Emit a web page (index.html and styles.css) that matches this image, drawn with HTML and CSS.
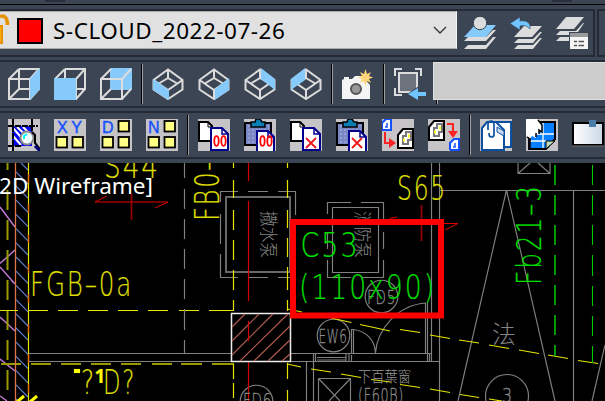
FILE: index.html
```html
<!DOCTYPE html>
<html lang="en">
<head>
<meta charset="utf-8">
<title>S-CLOUD</title>
<link rel="stylesheet" href="styles.css">
</head>
<body>
<svg class="defs" aria-hidden="true">
  <defs>
    <g id="box"><path d="M1 11H22V31H1ZM11 1H31V21H11V1M1 11L11 1M22 11L31 1M1 31L11 21M22 31L31 21" fill="none" stroke="#dcdcdc" stroke-width="2"/></g>
    <g id="iso"><path d="M1.500 12L16 1.500L30.500 12V21.500L16 31L1.500 21.500ZM1.500 12L16 22L30.500 12M16 22V31M16 1.500V10M16 10L6 16M16 10L26 16" fill="none" stroke="#dcdcdc" stroke-width="2"/></g>
    <g id="clip">
      <path d="M1 4H27V26H1Z" fill="#7b88c8" stroke="#000" stroke-width="2"/>
      <path d="M4 7H25M4 11H25M4 15H25M4 19H25M4 23H25" stroke="#b2b5cc" stroke-dasharray="2 2"/>
      <path d="M7 3H11L12 0H16L18 3H21V8H7Z" fill="#087fb5" stroke="#000" stroke-width="1.500"/>
    </g>
    <g id="sheet"><path d="M1 3H10L14 7V22H1Z" fill="#fff" stroke="#000" stroke-width="2"/><path d="M10 3V8H14" fill="none" stroke="#000"/></g>
    <g id="blue-sheet"><path d="M13 9H24L30 15V31H13Z" fill="#fff" stroke="#00008b" stroke-width="2"/><path d="M24 9V15H30" fill="none" stroke="#00008b" stroke-width="1.500"/></g>
    <g id="zeros" fill="none" stroke="#f00" stroke-width="1.800"><ellipse cx="17.500" cy="22" rx="2.200" ry="4.800"/><ellipse cx="24.500" cy="22" rx="2.200" ry="4.800"/></g>
    <path id="cross" d="M16 19L26 29M26 19L16 29" fill="none" stroke="#f01818" stroke-width="1.800"/>
    <g id="yellow-cell"><rect x="1" y="1" width="10.500" height="10.500" fill="#ffff85" stroke="#000" stroke-width="1.800"/></g>
    <g id="block"><path d="M1 8L6 2H16V21H1Z" fill="#fff" stroke="#000" stroke-width="2"/><path d="M6 18V9H9V5H14V13H11V17H6" fill="none" stroke="#777" stroke-width="2"/><path d="M6 13H8M11 9H13" stroke="#ffff20" stroke-width="3"/></g>
    <g id="mini"><path d="M0 11V4L4 0H9V11H0" fill="#fff" stroke="#1450ff" stroke-width="2"/><path d="M5 4V8H3" fill="none" stroke="#1450ff" stroke-width="1.500"/></g>
    <g id="layers" fill="#dcdcdc"><path d="M0 24L4 20H22L29 13H32L22 24ZM0 32L4 28H22L29 20H32L22 32Z"/></g>
  </defs>
</svg>
<main class="app">
  <div class="edge"><i class="notch first"></i><i class="notch second"></i></div>
  <div class="gutter"></div>
  <header class="layer-row">
    <section class="layer-bar">
      <div class="combo">
        <svg class="lock" width="10" height="32" viewBox="0 0 10 32"><path d="M0 13H3V29H0Z" fill="#ffad08"/><path d="M0 12H2V29H0" fill="none" stroke="#e69200" stroke-width="2"/><path d="M0 2.500C5 1 7.500 4 7.500 11" fill="none" stroke="#e69200" stroke-width="3.500"/></svg>
        <i class="swatch"></i>
        <span class="layer-name">S-CLOUD_2022-07-26</span>
        <svg class="chevron" width="14" height="8" viewBox="0 0 14 8"><path d="M1 1L7 7L13 1" fill="none" stroke="#333" stroke-width="1.300"/></svg>
      </div>
      <div class="layer-tools">
        <svg width="32" height="32"><use href="#layers"/><path d="M0 20L11 8H32L22 20Z" fill="#86c9fb"/><circle cx="16" cy="6" r="6.700" fill="#dcdcdc" stroke="#3c4554"/></svg>
        <svg width="32" height="32"><path d="M4 20L14 9H32L22 20ZM4 26L8 22H23L30 15H32L23 26ZM4 32L8 28H23L30 21H32L23 32Z" fill="#dcdcdc"/><path d="M0 6.500L10 0V4C17 3 21 6 20 12C17 9 14 8 10 9V13Z" fill="#70c4ff" stroke="#3c4554" stroke-width=".6"/></svg>
        <svg width="32" height="32"><path d="M0 12L10 0H28L18 12ZM0 18L4 14H20L27 6H28L20 18ZM0 24L4 20H14V24Z" fill="#dcdcdc"/><path d="M13 15H32V32H13Z" fill="#3c4554"/><path d="M14 16H32V32H14Z" fill="#f5f5f5"/><path d="M14 16H32V20H14Z" fill="#999"/><path d="M18 24.500H21M22.500 24.500H28M18 28.500H21M22.500 28.500H28" stroke="#555" stroke-width="1.500"/></svg>
      </div>
    </section>
    <section class="next-bar"></section>
  </header>

  <nav class="toolbar views">
    <svg width="32" height="32"><use href="#box"/><path d="M22 11L32 0V21L22 32Z" fill="#86c9fb"/></svg>
    <svg width="32" height="32"><use href="#box"/><path d="M0 10H22V32H0Z" fill="#86c9fb"/></svg>
    <svg width="32" height="32"><path d="M10 0H32V22H10Z" fill="#86c9fb"/><path d="M1 11H22V31H1ZM1 11L11 1M22 11L31 1M1 31L11 21M22 31L31 21" fill="none" stroke="#dcdcdc" stroke-width="2"/></svg>
    <i class="sep"></i>
    <svg width="32" height="32"><use href="#iso"/><path d="M1 11L17 22V32L1 22Z" fill="#86c9fb"/></svg>
    <svg width="32" height="32"><use href="#iso"/><path d="M17 21L31 10V22L17 32Z" fill="#86c9fb"/></svg>
    <svg width="32" height="32"><use href="#iso"/><path d="M17 0L31 11V22L17 11Z" fill="#86c9fb"/></svg>
    <svg width="32" height="32"><use href="#iso"/><path d="M1 11L15 0V12L1 22Z" fill="#86c9fb"/></svg>
    <i class="sep"></i>
    <svg width="32" height="32"><path d="M0 12L2 11V9H7V11H10L13 8H20L28 17V31H0Z" fill="#f4f4f4"/><circle cx="14" cy="21" r="5" fill="#999" stroke="#555" stroke-width="2"/><path d="M23.500 1L25 6L29 4L27 8L31 9.500L27 11L29 15L25 13L23.500 18L22 13L18 15L20 11L16 9.500L20 8L18 4L22 6Z" fill="#ffd478"/></svg>
    <i class="sep"></i>
    <svg width="32" height="32"><path d="M1 8V1H8M21 1H27V8M1 20V27H8" fill="none" stroke="#dcdcdc" stroke-width="2"/><path d="M5 5H23V24H5Z" fill="#6d727c" stroke="#dcdcdc" stroke-width="2"/><path d="M13 26L25 18V32Z" fill="#3c4554"/><path d="M14 26L24 20V24H32V28H24V32Z" fill="#70c4ff"/></svg>
    <i class="sep stub"></i>
    <div class="panel"></div>
  </nav>

  <nav class="toolbar tools">
    <svg width="32" height="32"><path class="paper" d="M0 0H32V32H0Z"/><path d="M4 7H24V27H4Z" fill="#0808f0"/><path d="M5 9L19 25M9 8L23 21M15 8L23 16M5 17L13 26" stroke="#fff" stroke-width="2"/><path d="M5 0V32M24 0V12M0 7H30M0 27H13" fill="none" stroke="#000" stroke-width="2" stroke-dasharray="6 1"/><circle cx="19" cy="19" r="6.500" fill="#f2ffff" stroke="#888" stroke-width="2"/><path d="M16 20V17L19 15" fill="none" stroke="#0ff" stroke-width="2"/><path d="M24 13L27 16V24L32 30" fill="none" stroke="#000" stroke-width="2"/><path d="M27 27L32 32" stroke="#000080" stroke-width="3"/></svg>
    <svg width="32" height="32"><path class="paper" d="M0 0H32V32H0Z"/><text class="icon-letter" x="3" y="14" textLength="25">XY</text><use href="#yellow-cell" x="1.500" y="17"/><use href="#yellow-cell" x="17.500" y="17"/></svg>
    <svg width="32" height="32"><path class="paper" d="M0 0H32V32H0Z"/><text class="icon-letter" x="2" y="14">D</text><use href="#yellow-cell" x="1.500" y="17"/><use href="#yellow-cell" x="17.500" y="17"/><use href="#yellow-cell" x="17.500" y="1"/></svg>
    <svg width="32" height="32"><path class="paper" d="M0 0H32V32H0Z"/><text class="icon-letter" x="2" y="14">N</text><use href="#yellow-cell" x="1.500" y="17"/><use href="#yellow-cell" x="17.500" y="17"/><use href="#yellow-cell" x="17.500" y="1"/></svg>
    <i class="sep"></i>
    <svg width="32" height="32"><path class="paper" d="M0 0H32V32H0Z"/><use href="#sheet"/><use href="#blue-sheet"/><use href="#zeros" x="1"/></svg>
    <svg width="32" height="32"><path class="paper" d="M0 0H32V32H0Z"/><use href="#clip"/><use href="#blue-sheet" y="3"/><use href="#zeros" x="1"/></svg>
    <svg width="32" height="32"><path class="paper" d="M0 0H32V32H0Z"/><use href="#sheet"/><use href="#blue-sheet"/><use href="#cross"/></svg>
    <svg width="32" height="32"><path class="paper" d="M0 0H32V32H0Z"/><use href="#clip"/><use href="#blue-sheet" y="3"/><use href="#cross"/></svg>
    <svg width="32" height="32"><path class="paper" d="M0 0H32V32H0Z"/><use href="#mini"/><path d="M3 13V24H8" fill="none" stroke="#f22" stroke-width="2"/><path d="M7 19L14 24L7 29Z" fill="#f22"/><use href="#block" x="15" y="8"/></svg>
    <svg width="32" height="32"><path class="paper" d="M0 0H32V32H0Z"/><use href="#block"/><path d="M19 5H25V13" fill="none" stroke="#f22" stroke-width="2"/><path d="M20 12H30L25 19Z" fill="#f22"/><use href="#mini" x="22" y="20"/></svg>
    <i class="sep"></i>
    <svg width="32" height="32"><path class="paper" d="M0 0H32V32H0Z"/><path d="M12 3H31V28H20Z" fill="#fff" stroke="#0c50a0" stroke-width="2"/><path d="M2 9L7 3H16L24 11V31H2Z" fill="#fff" stroke="#0c50a0" stroke-width="2"/><path d="M17 8L24 12V17L17 13Z" fill="#c7d8f0" stroke="#0c50a0"/><path d="M8 11V5Q8 2 11 2Q14 2 14 6V16Q14 18 11 18Q9 18 9 14" fill="none" stroke="#0c50a0" stroke-width="1.700"/></svg>
    <svg width="32" height="32"><path class="paper" d="M0 0H32V32H0Z"/><path d="M3 3H29V20L20 30H3Z" fill="#087fff" stroke="#000" stroke-width="2"/><path d="M17 4V29M4 15H28M4 22H20" stroke="#fff" stroke-width="1.300"/><path d="M20 30V22H29Z" fill="#c1ddc0" stroke="#000"/><path d="M0 0H11L16 6V14L13 12V16L10 14V19L6 17L4 20L0 16Z" fill="#fff"/><path d="M1 18L4 20V29M12 1L16 6V13L13 11V15M10 14V18" fill="none" stroke="#000" stroke-width="1.500"/></svg>
    <svg width="34" height="32"><defs><linearGradient id="glass" x1="0" y1="0" x2="1" y2="0"><stop stop-color="#fff"/><stop offset="1" stop-color="#cbd8e6"/></linearGradient></defs><path d="M1 4H31V26H1Z" fill="url(#glass)" stroke="#000" stroke-width="2"/><path d="M0 27H32" stroke="#777"/><path d="M17 1H24V8H17Z" fill="#4b7ba9"/></svg>
  </nav>

  <section class="viewport">
  <svg class="drawing" width="605" height="238" viewBox="0 163 605 238">
    <g class="blue">
      <path d="M21 163L28 170M16 171.800L28 184M16 186L28 198.200M16 200.200L28 212.400M16 214.400L28 226.600M16 228.600L28 240.800M16 242.800L28 255M16 257L28 269.200M16 271.200L28 283.400M16 285.400L28 297.600M16 299.600L28 311.800M16 313.800L28 326M16 328L28 340.200M16 342.200L28 354.400M16 356.400L28 368.600M16 370.600L28 382.800M16 384.800L28 397M16 399L18 401"/>
    </g>
    <path class="magenta" d="M0 207L15 227M15 250L0 263.500M0 267L15 284M11 280L15 284M0 317L15 331M0 359L15 371M0 396L7 401"/>
    <path class="olive" d="M7.500 163V170M7.500 190V210M7.500 220V240M7.500 250V270M7.500 280V300M7.500 310V330M7.500 340V360M7.500 370V390M1 364H21M31 364H51M61 364H81M91 364H111M121 364H141M152 364H172M181 364H202M212 364H234"/>
    <path class="orange" d="M15.500 163V401"/>
    <path class="yellow" d="M28.500 163V401M0 310.500H18M29 310.500H48M58 310.500H78M88 310.500H108M118 310.500H138M148 310.500H168M179 310.500H199M209 310.500H234"/>
    <path class="ember" d="M28.500 174V183M28.500 204V213M28.500 235V243M28.500 264V273M28.500 294V303M28.500 324V333M28.500 354V363M28.500 384V393"/>
    <path class="thick-yellow" d="M17 402L24 396M30 402L37 396"/>

    <g class="grey">
      <path d="M184.500 163V178M184.500 189V209M184.500 219V239M184.500 249V269M184.500 279V299M184.500 309V330M184.500 340V353M29 353.500H231M29 361.500H231M290 353.500H432M290 361.500H440"/>
      <path d="M220.500 202V191.500H238M248 191.500H268M278 191.500H295.500V215M220.500 214V244M220.500 254V277.500H238M248 277.500H268M278 277.500H290"/>
      <path class="pump" d="M226 197H290V272H226Z"/>
      <path d="M327.500 214V202.500H351M361 202.500H383.500V222M327.500 232V249M327.500 260V277.500H351M361 277.500H383.500V260M383.500 232V249M332.500 207.500H378.500V272.500H332.500Z"/>
      <path d="M431.500 163V353M439.500 163V401M440 190.500H605M573.500 190V401"/>
      <path d="M518 163V173.500H550V163M518 173.500L530 163M550 173.500L538 163M506.500 190L458 401M506.500 190L555 401M605 345L592 401"/>
      <circle cx="333.500" cy="335.500" r="16.300"/><circle cx="381.500" cy="296.500" r="16.300"/><circle cx="256.500" cy="401.500" r="16.300"/><circle cx="507" cy="396" r="21.500"/>
      <path d="M351.500 353V329.500H353.500V353M353 329.500C366 331 375 340 375.500 353M375.500 353C377 330 397 305 426 303M425.500 303V353M427.500 303V361M429.500 353V361M431.500 353V361M306.500 362V401M313.500 353V401M315.500 353V361M317 357.500H346M317 360H346M346 353V361M349 353V361M351.500 355V361"/>
      <path d="M318.500 378.500H350.500V401M318.500 378.500V401M318.500 378.500L340 401M350.500 378.500L329 401"/>
    </g>
    <g class="red">
      <path class="dark-red" d="M95 202H168M131.500 194V220M421.500 205V241"/>
      <path d="M107 196L95 202M168 202L155 208M390 218.500L397 217M443 223.500H458L445 230"/>
    </g>
    <path class="column-line" d="M248.500 163V181M248.500 201V301M248.500 362V401"/>
    <path class="yellow" d="M233.500 163V168M233.500 180V198M233.500 210V230M233.500 240V260M233.500 270V290M233.500 300V311M233.500 364V379M233.500 383V398M287.500 163V168M287.500 180V198M287.500 210V228M287.500 238V257M287.500 267V290M287.500 300V311M287.500 363V379M287.500 390V401"/>
    <path class="yellow" d="M287 309L302 312M331 318L351.500 322.500M360 324.500L390 331M400 329.500L420 332.500M430 335L450 338.500M459 340L479 343M489 345L509 348.500M519 350L539 353.500M548 355L568 358.500M578 360.500L598 363.500M287 364L301 367M311 369L331 372M341 374L361 377.500M371 379.500L391 382M400 384.500L420 387.500M430 389L450 392.500M460 394.500L479 397.500M489 399L502 401"/>
    <path class="hatched" d="M231.500 313.500H290.500V361.500H231.500Z"/>
    <path class="hatch" d="M232 327L245 314M232 341L259 314M232 355L273 314M240 361L288 314M254 361L290 326M268 361L290 340M282 361L290 354"/>
    <path class="column-line" d="M248.500 321V341"/>
    <path class="green-line" d="M592.500 165V185M592.500 195V215M592.500 225V245M592.500 255V276M592.500 286V306M592.500 316V336M592.500 346V363"/>
    <path class="green-line deep" d="M555 165V185M555 195V215M555 225V245M555 255V275M555 285V305M555 315V335M555 345V356"/>

    <g class="cad yellow-text">
      <text x="104" y="178" textLength="56" lengthAdjust="spacingAndGlyphs">S44</text>
      <text x="397" y="200" textLength="50" lengthAdjust="spacingAndGlyphs">S65</text>
      <text transform="translate(218.500 221) rotate(-90)" textLength="64" lengthAdjust="spacingAndGlyphs">FB0–</text>
      <text x="30" y="296" textLength="103" lengthAdjust="spacingAndGlyphs">FGB–0a</text>
      <text x="81" y="394" textLength="15" lengthAdjust="spacingAndGlyphs">?</text><text class="bold-one" x="94.500" y="383">1</text><text x="103" y="394" textLength="33" lengthAdjust="spacingAndGlyphs">D?</text>
      <path d="M74 369H80V373H74Z"/>
    </g>
    <g class="cad label-text">
      <text x="318.500" y="343" textLength="29" lengthAdjust="spacingAndGlyphs">EW6</text>
      <text x="367" y="304" textLength="29" lengthAdjust="spacingAndGlyphs">FD5</text>
      <text x="243" y="407" textLength="29" lengthAdjust="spacingAndGlyphs">FD6</text>
      <text x="502" y="402" textLength="11" lengthAdjust="spacingAndGlyphs">3</text>
      <text x="358" y="402" textLength="46" lengthAdjust="spacingAndGlyphs">(F60B)</text>
    </g>
    <g class="cjk">
      <text transform="translate(262 211) rotate(90)" textLength="47" lengthAdjust="spacingAndGlyphs">撒水泵</text>
      <text transform="translate(356 211) rotate(90)" textLength="47" lengthAdjust="spacingAndGlyphs">消防泵</text>
      <text class="wide" x="492" y="343">法</text>
      <text class="small" x="358" y="382" textLength="53" lengthAdjust="spacingAndGlyphs">下百葉窗</text>
    </g>
    <g class="cad green-text">
      <text x="300.500" y="257" textLength="59" lengthAdjust="spacingAndGlyphs">C53</text>
      <text x="299" y="299" textLength="137" lengthAdjust="spacingAndGlyphs">(110x90)</text>
      <text transform="translate(541 285) rotate(-90)" textLength="101" lengthAdjust="spacingAndGlyphs">Fb21–3</text>
    </g>
    <path class="callout" d="M293 222H441V315.500H293Z"/>
    <text class="view-label" x="-1" y="194" textLength="154" lengthAdjust="spacingAndGlyphs">2D Wireframe]</text>
  </svg>
  </section>
</main>
</body>
</html>
```
FILE: styles.css
```css
* { box-sizing: border-box; }
body { margin: 0; overflow: hidden; background: #3c4554; font-family: "Noto Sans", sans-serif; }
.defs { display: none; }
.app { width: 605px; height: 401px; display: flex; flex-direction: column; background: #3c4554; }
.app svg { display: block; flex: none; }
.edge { height: 5px; border-bottom: 1px solid #000; display: flex; }
.notch { width: 20px; height: 2px; background: #292f3b; }
.first { margin-left: 45px; }
.second { margin-left: 487px; }
.gutter { height: 4px; }
.layer-row { height: 48px; display: flex; gap: 2px; }
.layer-bar { width: 595px; display: flex; border: solid #252b36; border-width: 2px 2px 2px 0; }
.next-bar { flex: 1; border: 2px solid #252b36; border-right: 0; }
.combo { width: 457px; height: 38px; display: flex; align-items: center; background: #e1e1e1; border: 1px solid #aaa; border-left: 0; border-right-color: #f5f5f5; }
.lock { margin-top: -1px; }
.swatch { flex: none; width: 26px; height: 26px; margin: 1px 10px 0 7px; background: #f00; border: 2px solid #000; }
.layer-name { flex: none; width: 380px; padding-top: 2px; color: #000; font-size: 22.500px; letter-spacing: .52px; line-height: 34px; white-space: nowrap; }
.layer-tools { display: flex; gap: 14px; padding: 6px 0 0 7px; }
.toolbar { display: flex; gap: 14px; padding-left: 8px; border: solid #252b36; border-width: 2px 0; flex: none; overflow: hidden; }
.views { height: 48px; margin-top: 3px; padding-top: 6px; }
.tools { height: 48px; margin-top: 3px; padding-top: 6px; }
.sep { flex: none; width: 2px; height: 40px; margin: -4px -5px 0; background: linear-gradient(90deg, #000 50%, #a0a0a0 50%); }
.stub { margin: -4px -5px 0 -4px; }
.panel { flex: none; width: 173px; height: 38px; margin: -6px 0 0 -14px; background: #ccc; border: 1px solid #e0e0e0; }
.paper { fill: #c7c4c7; }
.icon-letter { font: 16px "Liberation Sans", sans-serif; fill: #1450ff; stroke: #1450ff; stroke-width: .4; }
.viewport { height: 238px; margin-top: auto; background: #000; flex: none; }
.drawing { overflow: hidden; }
.drawing path, .drawing circle { fill: none; }
.blue { stroke: #5d7fd0; stroke-width: 1.200; }
.magenta { stroke: #c47ad6; stroke-width: 1.400; }
.orange { stroke: #df7444; stroke-width: 1.300; }
.olive { stroke: #999900; stroke-width: 2; }
.yellow { stroke: #e5e500; stroke-width: 1.200; }
.ember { stroke: #ef6b08; stroke-width: 1.300; }
.drawing .thick-yellow { stroke: #ff0; stroke-width: 3; }
.grey { stroke: #808080; stroke-width: 1.150; }
.pump { stroke-width: 2; stroke: #686868; }
.red { stroke: #e00000; stroke-width: 1; }
.dark-red { stroke: #9b0000; stroke-width: 1.700; }
.column-line { stroke: #d70000; stroke-width: 1.200; }
.drawing .hatched { fill: #000; stroke: #eee; stroke-width: 1.500; }
.hatch { stroke: #b65b51; stroke-width: 1.100; }
.green-line { stroke: #00cc00; stroke-width: 1.100; }
.deep { stroke: #009900; stroke-width: 2; }
.cad text { font-family: "DejaVu Sans", sans-serif; font-weight: 200; font-size: 34px; letter-spacing: 2.500px; }
.yellow-text { fill: #e0e000; stroke: #e0e000; stroke-width: .15; }
.drawing .yellow-text path { fill: #ff0; }
.cad .bold-one { font: bold 19px "Noto Sans", sans-serif; letter-spacing: 0; fill: #ff0; }
.green-text { fill: #00e000; stroke: #00e000; stroke-width: .15; }
.label-text { fill: #8c8c8c; stroke: #8c8c8c; stroke-width: .3; }
.cad.label-text text { font-size: 19px; letter-spacing: 1px; }
.cjk { font-family: "Noto Sans CJK TC", sans-serif; font-weight: 300; font-size: 18px; fill: #858585; }
.cjk .wide { font-size: 24px; }
.cjk .small { font-size: 15px; fill: #999; }
.drawing .callout { stroke: #f00; stroke-width: 6; }
.view-label { font-size: 22.500px; fill: #fff; }
```
